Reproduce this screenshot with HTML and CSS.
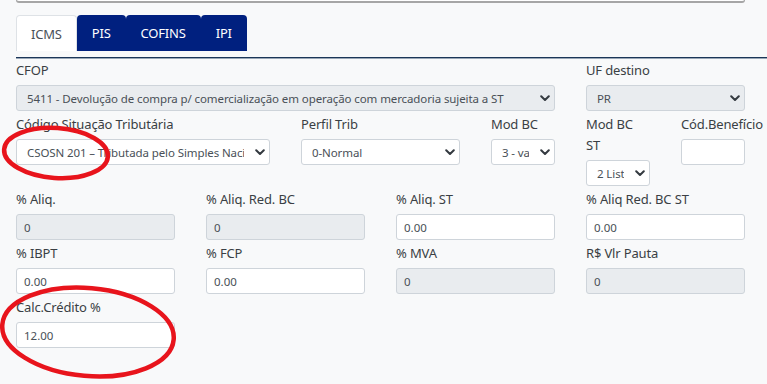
FILE: index.html
```html
<!DOCTYPE html>
<html lang="pt-BR">
<head>
<meta charset="utf-8">
<title>ICMS</title>
<link rel="stylesheet" href="styles.css">
</head>
<body>
<div class="page">
  <div class="topbox"></div>
  <ul class="tabs">
    <li class="tab active">ICMS</li>
    <li class="tab">PIS</li>
    <li class="tab">COFINS</li>
    <li class="tab">IPI</li>
  </ul>
  <div class="rule"></div>
  <div class="form">
    <div class="field s6">
      <label>CFOP</label>
      <div class="select disabled"><span class="val">5411 - Devolução de compra p/ comercialização em operação com mercadoria sujeita a ST</span><svg class="chev" viewBox="0 0 10 7" width="10" height="7"><path d="M1.2 1.2 L5 5 L8.8 1.2"/></svg></div>
    </div>
    <div class="field s2">
      <label>UF destino</label>
      <div class="select disabled"><span class="val">PR</span><svg class="chev" viewBox="0 0 10 7" width="10" height="7"><path d="M1.2 1.2 L5 5 L8.8 1.2"/></svg></div>
    </div>

    <div class="field s3">
      <label>Código Situação Tributária</label>
      <div class="select"><span class="val">CSOSN 201 – Tributada pelo Simples Nacional com permissão de crédito</span><svg class="chev" viewBox="0 0 10 7" width="10" height="7"><path d="M1.2 1.2 L5 5 L8.8 1.2"/></svg></div>
    </div>
    <div class="field s2">
      <label>Perfil Trib</label>
      <div class="select"><span class="val">0-Normal</span><svg class="chev" viewBox="0 0 10 7" width="10" height="7"><path d="M1.2 1.2 L5 5 L8.8 1.2"/></svg></div>
    </div>
    <div class="field s1">
      <label>Mod BC</label>
      <div class="select"><span class="val">3 - valor da operação</span><svg class="chev" viewBox="0 0 10 7" width="10" height="7"><path d="M1.2 1.2 L5 5 L8.8 1.2"/></svg></div>
    </div>
    <div class="field s1">
      <label class="wrap">Mod BC ST</label>
      <div class="select"><span class="val">2 Lista Neutra</span><svg class="chev" viewBox="0 0 10 7" width="10" height="7"><path d="M1.2 1.2 L5 5 L8.8 1.2"/></svg></div>
    </div>
    <div class="field s1">
      <label class="nowrap">Cód.Benefício</label>
      <div class="input"></div>
    </div>

    <div class="field s2"><label>% Aliq.</label><div class="input disabled">0</div></div>
    <div class="field s2"><label>% Aliq. Red. BC</label><div class="input disabled">0</div></div>
    <div class="field s2"><label>% Aliq. ST</label><div class="input">0.00</div></div>
    <div class="field s2"><label>% Aliq Red. BC ST</label><div class="input">0.00</div></div>

    <div class="field s2"><label>% IBPT</label><div class="input">0.00</div></div>
    <div class="field s2"><label>% FCP</label><div class="input">0.00</div></div>
    <div class="field s2"><label>% MVA</label><div class="input disabled">0</div></div>
    <div class="field s2"><label>R$ Vlr Pauta</label><div class="input disabled">0</div></div>

    <div class="field s2"><label>Calc.Crédito %</label><div class="input">12.00</div></div>
  </div>
  <svg class="marks" width="767" height="384" viewBox="0 0 767 384">
    <ellipse cx="56" cy="153" rx="52" ry="25" transform="rotate(4 56 153)"/>
    <ellipse cx="88" cy="332" rx="86" ry="44" transform="rotate(5 88 332)"/>
  </svg>
</div>
</body>
</html>
```
FILE: styles.css
```css
* { box-sizing: border-box; }
html, body { margin: 0; padding: 0; }
body {
  background: #f8f9fa;
  font-family: "Noto Sans", "Open Sans", sans-serif;
  color: #343a40;
  width: 767px;
  height: 384px;
  overflow: hidden;
}
.page {
  position: relative;
  padding-left: 16px;
  height: 384px;
}
.topbox {
  width: 729px;
  height: 3px;
  border: 1px solid #a6a6a6;
  border-top: none;
  border-bottom-width: 2px;
  border-radius: 0 0 3px 3px;
  background: #fff;
}
.tabs {
  list-style: none;
  margin: 12px 0 0;
  padding: 0;
  display: flex;
  height: 36px;
}
.tab {
  display: flex;
  align-items: center;
  padding: 0 15px;
  font-size: 13px;
  color: #fff;
  background: #00207f;
  border-radius: 4px 4px 0 0;
  letter-spacing: -0.2px;
}
.tab.active {
  background: #fff;
  color: #495057;
  border: 1px solid #dee2e6;
  border-bottom: none;
  padding: 0 14px;
}
.rule {
  margin-top: 6px;
  height: 1px;
  background: #1b3658;
  box-shadow: 0 0.5px 0 #3a5675;
}
.form {
  display: grid;
  grid-template-columns: repeat(8, 64px);
  column-gap: 31px;
  row-gap: 3px;
  width: 729px;
  margin-top: 2px;
  align-items: start;
}
.s1 { grid-column: span 1; }
.s2 { grid-column: span 2; }
.s3 { grid-column: span 3; }
.s6 { grid-column: span 6; }
.field label {
  display: block;
  font-size: 13px;
  line-height: 21px;
  margin-bottom: 4px;
  color: #3a3f44;
  letter-spacing: -0.15px;
}
.field label.nowrap { white-space: nowrap; }
.select, .input {
  height: 26px;
  border: 1px solid #ced4da;
  border-radius: 3px;
  background: #fff;
  font-size: 11.5px;
  color: #495057;
  display: flex;
  align-items: center;
}
.select { padding: 0 4px 0 10px; }
.input { padding: 0 7px; }
.disabled { background: #e9ecef; }
.select .val {
  flex: 1;
  min-width: 0;
  overflow: hidden;
  white-space: nowrap;
  letter-spacing: -0.1px;
}
.chev {
  flex: none;
  margin-left: 11px;
  fill: none;
  stroke: #343a40;
  stroke-width: 2;
  stroke-linecap: round;
  stroke-linejoin: round;
}
.marks {
  position: absolute;
  left: 0;
  top: 0;
  pointer-events: none;
}
.marks ellipse {
  fill: none;
  stroke: #e8141c;
  stroke-width: 4.5;
}
```
